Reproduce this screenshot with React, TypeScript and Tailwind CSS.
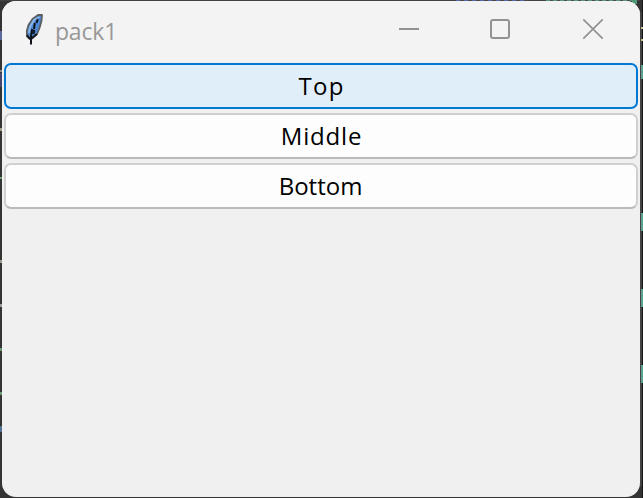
const leftSpecks = [
  { top: 31, height: 9, color: 'bg-[#5a6a9c]' },
  { top: 70, height: 2, color: 'bg-[#8a8a8a]' },
  { top: 73, height: 14, color: 'bg-[#45476f]' },
  { top: 128, height: 3, color: 'bg-[#a39c8c]' },
  { top: 177, height: 2, color: 'bg-[#6fa07c]' },
  { top: 260, height: 3, color: 'bg-[#9c9c90]' },
  { top: 304, height: 3, color: 'bg-[#9c9c9c]' },
  { top: 348, height: 3, color: 'bg-[#6c9a70]' },
  { top: 392, height: 3, color: 'bg-[#6c9a70]' },
  { top: 426, height: 6, color: 'bg-[#4f7290]' },
];

const rightSpecks = [
  { top: 27, height: 2, color: 'bg-[#c5c590]' },
  { top: 39, height: 2, color: 'bg-[#c5c590]' },
  { top: 65, height: 14, color: 'bg-[#5ba292]' },
  { top: 213, height: 18, color: 'bg-[#5ba292]' },
  { top: 289, height: 18, color: 'bg-[#5ba292]' },
  { top: 365, height: 18, color: 'bg-[#5ba292]' },
];

function Feather() {
  return (
    <svg className="h-[34px] w-6 shrink-0" viewBox="0 0 24 34">
      <path d="M20 3 L16 3 L10.5 7 L6.5 13 L4.8 19 L5 24.5 L7.5 26.5 L10 26.5 L15 22 L17.5 16 L19.5 9Z" fill="#4c88d6" stroke="#5b5f62" strokeWidth="1.8" strokeLinejoin="round" />
      <path d="M17.5 5 L12 8 L8 15 L6.8 21" stroke="#8fb6e6" strokeWidth="1.8" fill="none" />
      <path d="M5 23 L7.5 26.5 L9.3 26.5 L15 22" stroke="#15181c" strokeWidth="2" fill="none" />
      <path d="M15.8 7 L14.5 11 M12.8 11 L12 17 M10.2 17 L9 24 M12.3 18 L11.5 22 M9 24 L9 32.5" stroke="#10151c" strokeWidth="2" fill="none" />
    </svg>
  );
}

function TitleBar() {
  return (
    <header className="flex h-[60px] shrink-0 items-start bg-[#f3f3f3] pl-[20px] pt-[11px]">
      <Feather />
      <span className="ml-[9px] mt-[2px] w-[80px] font-['Open_Sans',sans-serif] text-[23px] leading-[34px] tracking-[-0.2px] text-[#989898]">pack1</span>
      <div className="ml-auto flex pr-[36px] pt-[6px]">
        <svg className="mr-[69px] size-[22px]" viewBox="0 0 22 22">
          <path d="M1 11H21" stroke="#929292" strokeWidth="2" />
        </svg>
        <svg className="mr-[71px] size-[22px]" viewBox="0 0 22 22">
          <rect x="2" y="2" width="18" height="18" rx="2" fill="none" stroke="#929292" strokeWidth="2" />
        </svg>
        <svg className="size-[22px]" viewBox="0 0 22 22">
          <path d="M1.3 1.3L20.7 20.7M20.7 1.3L1.3 20.7" stroke="#929292" strokeWidth="1.7" />
        </svg>
      </div>
    </header>
  );
}

const buttonBase =
  "flex h-[46px] items-center justify-center rounded-[7px] border-2 font-['Open_Sans',sans-serif] text-[24px] leading-[32px] text-black";

export default function App() {
  return (
    <div className="relative h-[498px] w-[643px] overflow-hidden bg-[#343434] pl-[2px] pt-px">
      <div className="absolute left-0 top-0 h-px w-[640px] bg-[#454245]" />
      <div className="absolute left-[456px] top-0 h-px w-[72px] bg-[repeating-linear-gradient(90deg,#5264a8_0px,#5264a8_4px,#47444d_4px,#47444d_8px)]" />
      <div className="absolute left-[546px] top-0 h-px w-[90px] bg-[repeating-linear-gradient(90deg,#5b9482_0px,#5b9482_4px,#45504d_4px,#45504d_7px)]" />
      <div className="absolute left-[632px] top-0 h-[4px] w-[5px] bg-[#4e9a76]" />
      {leftSpecks.map((s) => (
        <div key={s.top} className={`absolute left-0 w-[2px] ${s.color}`} style={{ top: s.top, height: s.height }} />
      ))}
      <div className="absolute left-[640px] top-[12px] h-[474px] w-[2px] bg-[#444444]" />
      <div className="absolute left-[642px] top-0 h-[498px] w-px bg-[#161616]" />
      {rightSpecks.map((s) => (
        <div key={s.top} className={`absolute left-[641px] w-[2px] ${s.color}`} style={{ top: s.top, height: s.height }} />
      ))}
      <div className="relative flex h-[496px] w-[638px] flex-col overflow-hidden rounded-[14px] bg-[#f0f0f0]">
        <TitleBar />
        <main className="flex flex-col gap-1 px-[2px] pt-[2px]">
          <button className={`${buttonBase} border-[#0078d4] bg-[#e0eef9]`}>
            <span className="pl-px tracking-[1.3px]">Top</span>
          </button>
          <button className={`${buttonBase} border-[#d0d0d0] border-b-[#bababa] bg-[#fdfdfd]`}>
            <span className="pl-px tracking-[0.8px]">Middle</span>
          </button>
          <button className={`${buttonBase} border-[#d0d0d0] border-b-[#bababa] bg-[#fdfdfd]`}>
            <span className="pr-px">Bottom</span>
          </button>
        </main>
      </div>
    </div>
  );
}
